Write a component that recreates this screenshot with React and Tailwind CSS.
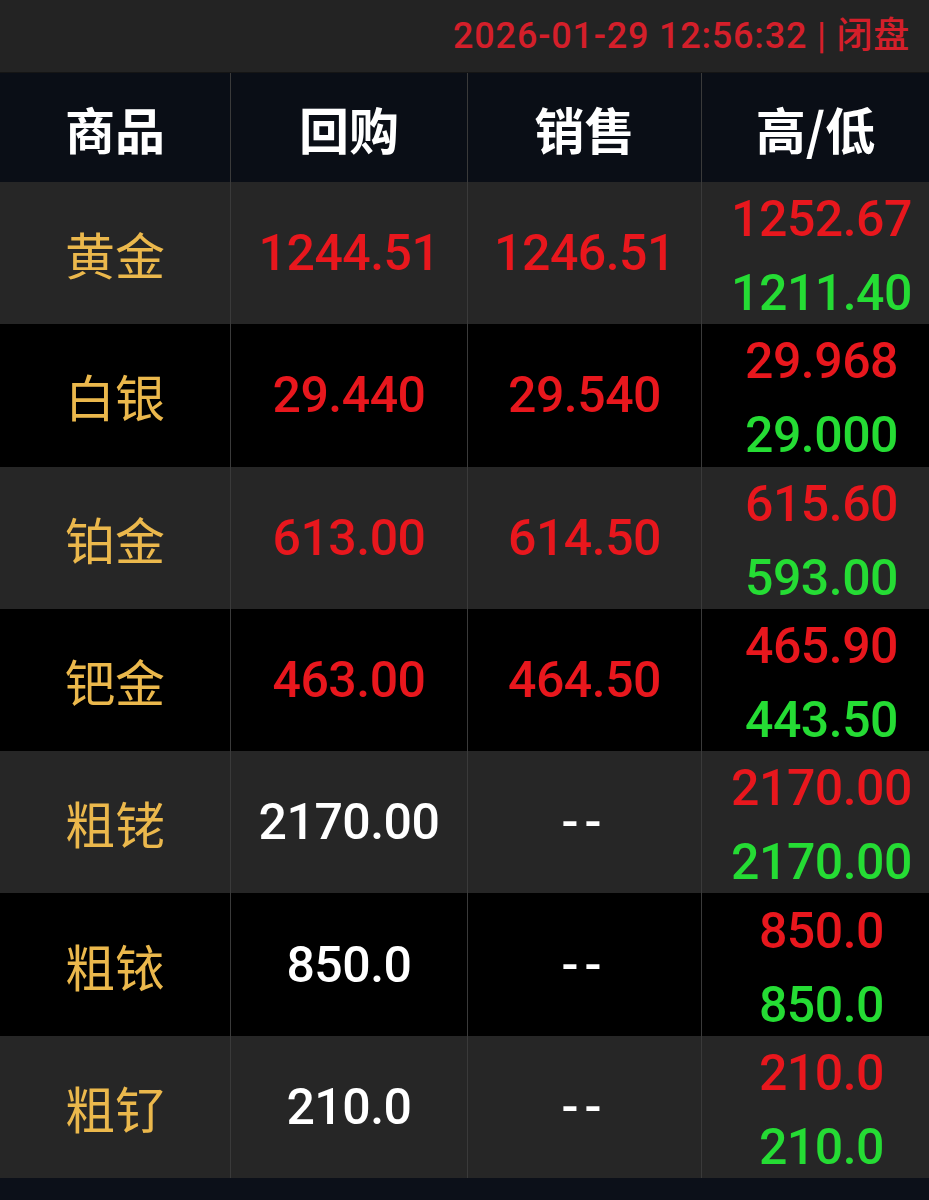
import React from 'react';

const rows = [
  { name: '黄金', buy: '1244.51', sell: '1246.51', high: '1252.67', low: '1211.40', live: true },
  { name: '白银', buy: '29.440', sell: '29.540', high: '29.968', low: '29.000', live: true },
  { name: '铂金', buy: '613.00', sell: '614.50', high: '615.60', low: '593.00', live: true },
  { name: '钯金', buy: '463.00', sell: '464.50', high: '465.90', low: '443.50', live: true },
  { name: '粗铑', buy: '2170.00', sell: '--', high: '2170.00', low: '2170.00', live: false },
  { name: '粗铱', buy: '850.0', sell: '--', high: '850.0', low: '850.0', live: false },
  { name: '粗钌', buy: '210.0', sell: '--', high: '210.0', low: '210.0', live: false },
];

const cols = 'grid grid-cols-[231px_237px_234px_1fr]';
const cjk = "font-['Noto_Sans_CJK_SC','Noto_Sans',sans-serif]";
const num = "font-['Roboto','Liberation_Sans',sans-serif] font-medium text-[50px] tracking-[-0.5px] leading-none";

function Cell({ children, last, className = '' }) {
  return (
    <div className={`flex items-center justify-center ${last ? '' : 'border-r border-[#3a3a3a]'} ${className}`}>
      {children}
    </div>
  );
}

export default function App() {
  return (
    <div className="w-[929px] h-[1200px] bg-[#0c1019] flex flex-col overflow-hidden">
      {/* ── status bar ── */}
      <div className="h-[73px] bg-[#232323] flex items-center justify-end pr-[19px] border-b border-[#151515]">
        <span className="font-['Roboto','Liberation_Sans','Noto_Sans_CJK_SC',sans-serif] font-medium text-[36px] tracking-[0.8px] text-[#d41f2a] leading-none">
          2026-01-29 12:56:32 | 闭盘
        </span>
      </div>

      {/* ── header ── */}
      <div className={`${cols} h-[109px] bg-[#0a0e16]`}>
        {['商品', '回购', '销售', '高/低'].map((h, i) => (
          <Cell key={h} last={i === 3} className="border-[#2c3038]">
            <span className={`${cjk} text-[50px] font-bold text-white leading-none`}>{h}</span>
          </Cell>
        ))}
      </div>

      {/* ── rows ── */}
      {rows.map((r, i) => (
        <div key={r.name} className={`${cols} h-[142.3px] ${i % 2 === 0 ? 'bg-[#262626]' : 'bg-black'}`}>
          <Cell>
            <span className={`${cjk} text-[50px] text-[#ebb84c] leading-none`}>{r.name}</span>
          </Cell>
          <Cell>
            <span className={`${num} ${r.live ? 'text-[#e8171d]' : 'text-white'}`}>{r.buy}</span>
          </Cell>
          <Cell>
            <span className={`${num} ${r.sell === '--' ? 'tracking-[6px] font-bold' : ''} ${r.live ? 'text-[#e8171d]' : 'text-white'}`}>{r.sell}</span>
          </Cell>
          <Cell last className="flex-col gap-[24px] pl-[12px] pt-[6px]">
            <span className={`${num} text-[#e8171d]`}>{r.high}</span>
            <span className={`${num} text-[#25dc34]`}>{r.low}</span>
          </Cell>
        </div>
      ))}
    </div>
  );
}
